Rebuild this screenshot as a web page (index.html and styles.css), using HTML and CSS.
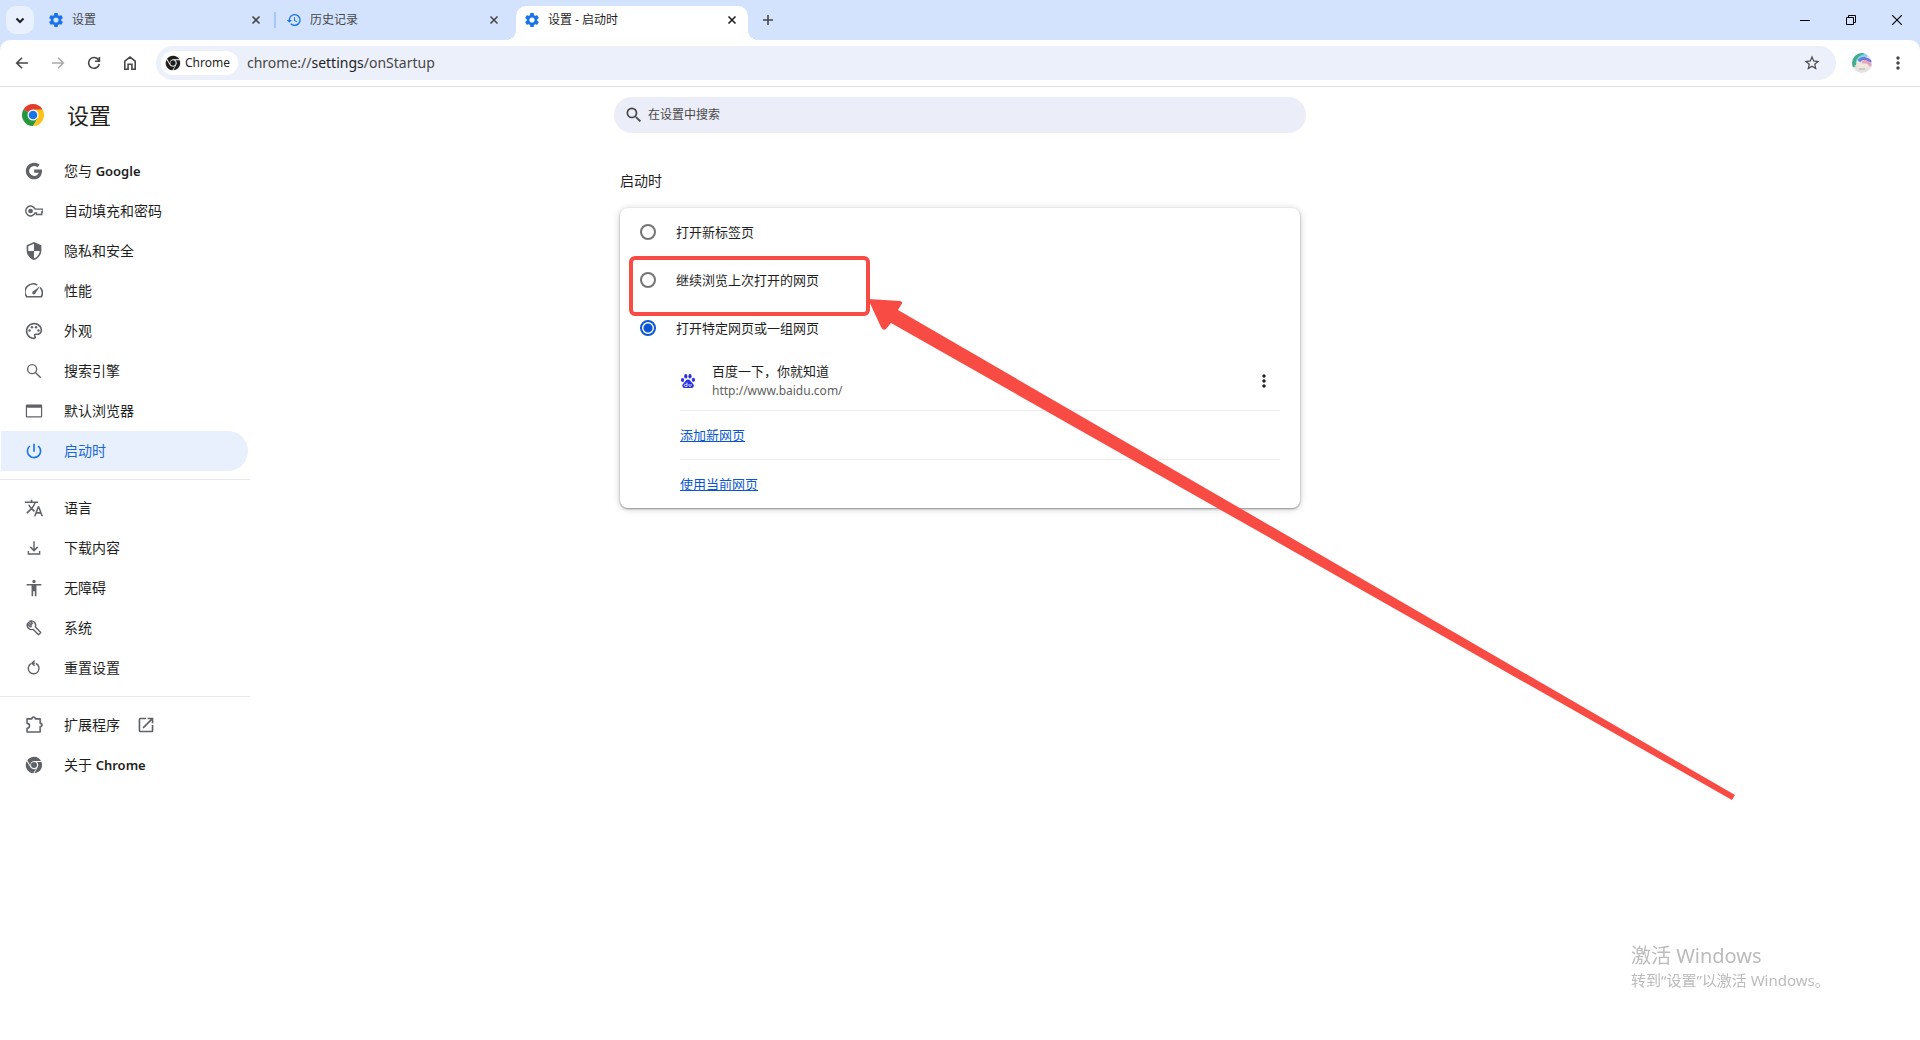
FILE: index.html
```html
<!DOCTYPE html>
<html lang="zh-CN">
<head>
<meta charset="utf-8">
<title>设置 - 启动时</title>
<link rel="stylesheet" href="styles.css">
</head>
<body>
<svg class="defs" aria-hidden="true">
  <symbol id="gear" viewBox="1 1 22 22"><path d="M19.14 12.94c.04-.3.06-.61.06-.94 0-.32-.02-.64-.07-.94l2.03-1.58c.18-.14.23-.41.12-.61l-1.92-3.32c-.12-.22-.37-.29-.59-.22l-2.39.96c-.5-.38-1.03-.7-1.62-.94l-.36-2.54c-.04-.24-.24-.41-.48-.41h-3.84c-.24 0-.43.17-.47.41l-.36 2.54c-.59.24-1.13.57-1.62.94l-2.39-.96c-.22-.08-.47 0-.59.22L2.74 8.87c-.12.21-.08.47.12.61l2.03 1.58c-.05.3-.09.63-.09.94s.02.64.07.94l-2.03 1.58c-.18.14-.23.41-.12.61l1.92 3.32c.12.22.37.29.59.22l2.39-.96c.5.38 1.03.7 1.62.94l.36 2.54c.05.24.24.41.48.41h3.84c.24 0 .44-.17.47-.41l.36-2.54c.59-.24 1.13-.56 1.62-.94l2.39.96c.22.08.47 0 .59-.22l1.92-3.32c.12-.22.07-.47-.12-.61l-2.01-1.58zM12 15.6c-1.98 0-3.6-1.62-3.6-3.6s1.62-3.6 3.6-3.6 3.6 1.62 3.6 3.6-1.62 3.6-3.6 3.6z"/></symbol>
  <symbol id="close" viewBox="0 0 16 16"><path d="M4.5 4.5l7 7M11.5 4.5l-7 7" stroke="currentColor" stroke-width="1.6" fill="none"/></symbol>
  <symbol id="search" viewBox="0 0 24 24"><path d="M15.5 14h-.79l-.28-.27A6.47 6.47 0 0 0 16 9.5 6.5 6.5 0 1 0 9.5 16c1.61 0 3.09-.59 4.23-1.57l.27.28v.79l5 4.99L20.49 19l-4.99-5zm-6 0C7.01 14 5 11.99 5 9.5S7.01 5 9.5 5 14 7.01 14 9.5 11.99 14 9.5 14z"/></symbol>
  <symbol id="dots" viewBox="0 0 24 24"><path d="M12 8c1.1 0 2-.9 2-2s-.9-2-2-2-2 .9-2 2 .9 2 2 2zm0 2c-1.1 0-2 .9-2 2s.9 2 2 2 2-.9 2-2-.9-2-2-2zm0 6c-1.1 0-2 .9-2 2s.9 2 2 2 2-.9 2-2-.9-2-2-2z"/></symbol>
  <symbol id="chrome" viewBox="0 0 24 24"><circle cx="12" cy="12" r="4"/><path d="M12 6.5h9.4A11 11 0 0 0 3 5.7l4.3 7.2A5.5 5.500 0 0 1 12 6.5zM2.2 7A11 11 0 0 0 11 23l4.2-6.6A5.5 5.5 0 0 1 7 14.6zM22 8h-6.3a5.5 5.5 0 0 1 1.2 6.5L12.500 23A11 11 0 0 0 22 8z"/></symbol>
</svg>

<header class="browser">
  <div class="tabstrip">
    <button class="tab-search" aria-label="搜索标签页"><svg width="16" height="16" viewBox="0 0 16 16"><path d="M4.500 6.500L8 10l3.500-3.500" fill="none" stroke="currentColor" stroke-width="2"/></svg></button>
    <div class="tabs">
      <div class="tab"><svg class="fav" aria-hidden="true"><use href="#gear"/></svg><span class="tab-title">设置</span><button class="tab-close" aria-label="关闭"><svg><use href="#close"/></svg></button></div>
      <span class="tab-sep"></span>
      <div class="tab"><svg class="fav" viewBox="0 0 24 24" aria-hidden="true"><path d="M13 3a9 9 0 0 0-9 9H1l3.890 3.890.07.14L9 12H6a7 7 0 1 1 2.060 4.940l-1.420 1.420A9 9 0 1 0 13 3zm-1 5v5l4.280 2.540.72-1.210-3.500-2.080V8H12z"/></svg><span class="tab-title">历史记录</span><button class="tab-close" aria-label="关闭"><svg><use href="#close"/></svg></button></div>
      <span class="tab-gap"></span>
      <div class="tab active"><svg class="fav" aria-hidden="true"><use href="#gear"/></svg><span class="tab-title">设置 - 启动时</span><button class="tab-close" aria-label="关闭"><svg><use href="#close"/></svg></button></div>
    </div>
    <button class="new-tab" aria-label="新标签页"><svg width="12" height="12" viewBox="0 0 12 12"><path d="M6 1v10M1 6h10" stroke="currentColor" stroke-width="1.600"/></svg></button>
    <div class="window-controls">
      <button aria-label="最小化"><svg width="10" height="10" viewBox="0 0 10 10"><path d="M0 5.500h10" stroke="#000"/></svg></button>
      <button aria-label="还原"><svg width="10" height="10" viewBox="0 0 10 10"><path d="M.5 2.500h7v7h-7zM2.500 2.500v-2h7v7h-2" fill="none" stroke="#000"/></svg></button>
      <button aria-label="关闭窗口"><svg width="10" height="10" viewBox="0 0 10 10"><path d="M0 0l10 10M10 0L0 10" stroke="#000" stroke-width="1.100"/></svg></button>
    </div>
  </div>

  <div class="toolbar">
    <div class="nav-buttons">
      <button aria-label="后退"><svg width="16" height="16" viewBox="0 0 16 16"><path d="M14 8H3M8 2.700L2.700 8 8 13.300" fill="none" stroke="currentColor" stroke-width="1.600"/></svg></button>
      <button aria-label="前进" disabled><svg width="16" height="16" viewBox="0 0 16 16"><path d="M2 8h11M8 2.700L13.300 8 8 13.300" fill="none" stroke="currentColor" stroke-width="1.600"/></svg></button>
      <button aria-label="重新加载"><svg width="16" height="16" viewBox="0 0 16 16"><path d="M12.600 5A5.400 5.400 0 1 0 13.300 9M13.400 2v4.200H9" fill="none" stroke="currentColor" stroke-width="1.600"/></svg></button>
      <button aria-label="主页"><svg width="16" height="16" viewBox="0 0 16 16"><path d="M2.800 14.200V6.100L8 2l5.200 4.100v8.100H9.900V9.300H6.100v4.900z" fill="none" stroke="currentColor" stroke-width="1.600"/></svg></button>
    </div>
    <div class="omnibox">
      <button class="chip"><svg width="16" height="16" aria-hidden="true"><use href="#chrome"/></svg>Chrome</button>
      <span class="url">chrome://<b>settings</b>/onStartup</span>
      <button class="star" aria-label="为此标签页添加书签"><svg width="18" height="18" viewBox="0 0 24 24"><path d="M22 9.240l-7.190-.62L12 2 9.190 8.630 2 9.240l5.460 4.730L5.820 21 12 17.270 18.180 21l-1.630-7.030L22 9.240zM12 15.400l-3.760 2.270 1-4.280-3.320-2.880 4.380-.38L12 6.100l1.710 4.040 4.380.38-3.320 2.880 1 4.280L12 15.400z"/></svg></button>
    </div>
    <div class="tool-actions">
      <button aria-label="个人资料"><svg width="20" height="20" viewBox="0 0 20 20"><clipPath id="avatar"><circle cx="10" cy="10" r="10"/></clipPath><g clip-path="url(#avatar)"><path fill="#e4e3e2" d="M0 0h20v20H0z"/><path fill="#3fae8c" d="M0 0h13L4 14H0z"/><path d="M5 10C6 5 10 2 15 3" fill="none" stroke="#7fd3ee" stroke-width="3"/><path d="M7 8c3-4 8-3 12 1" fill="none" stroke="#6f79dc" stroke-width="3"/><path d="M10 9c4-1 7 0 9 4" fill="none" stroke="#eaa3bf" stroke-width="3"/><path d="M2 13l2-1 1-5 3 3 3 1h4l2 3-1 3-1-3-4 1-3 1-1-4-3 2z" fill="#f1e8d8"/><path d="M7 16h6" stroke="#bbb3ad"/></g></svg></button>
      <button aria-label="自定义及控制"><svg width="20" height="20"><use href="#dots"/></svg></button>
    </div>
  </div>
</header>

<div class="settings">
  <div class="settings-header">
    <div class="brand">
      <svg width="24" height="24" viewBox="0 0 24 24" aria-hidden="true"><path d="M12 12L2.470 6.500A11 11 0 0 1 21.530 6.500z" fill="#e33b2e"/><path d="M12 12L2.470 6.500A11 11 0 0 0 12 23l5-8z" fill="#25973f"/><path d="M12 12l5 2.500L12 23A11 11 0 0 0 21.530 6.500H12z" fill="#fcc21b"/><circle cx="12" cy="12" r="5.500" fill="#fff"/><circle cx="12" cy="12" r="4.300" fill="#1a73e8"/></svg>
      <h1>设置</h1>
    </div>
    <label class="search"><svg width="20" height="20" aria-hidden="true"><use href="#search"/></svg><input type="search" placeholder="在设置中搜索" aria-label="在设置中搜索"></label>
    <div></div>
  </div>

  <div class="settings-body">
    <nav class="side">
      <ul>
        <li><a href="#people"><svg viewBox="1 1 22 22"><path d="M21.800 10.300H12.200v3.900h5.500c-.6 2.500-2.600 3.900-5.500 3.900a6.100 6.100 0 1 1 3.900-10.800l2.900-2.900A10.200 10.200 0 1 0 12.200 22.200c6 0 9.900-4.200 9.600-11.900z"/></svg><span>您与 <span class="latin">Google</span></span></a></li>
        <li><a href="#autofill"><svg viewBox="1 1 22 22"><path d="M13.400 9.700A6 6 0 1 0 13.400 14.300H15v2h6.500v-3H23V9.700z" fill="none" stroke="currentColor" stroke-width="1.700"/><circle cx="7.800" cy="12" r="2.900"/></svg>自动填充和密码</a></li>
        <li><a href="#privacy"><svg viewBox="1 1 22 22"><path d="M12 1L3 5v6c0 5.550 3.840 10.740 9 12 5.160-1.260 9-6.450 9-12V5l-9-4zm0 11H19c-.53 4.120-3.280 7.790-7 8.940zM12 12H5V6.300l7-3.110z"/></svg>隐私和安全</a></li>
        <li><a href="#performance"><svg viewBox="1 1 22 22"><path d="M19.500 7.800A9.800 9.800 0 0 1 21 19H3A9.800 9.800 0 0 1 16 4.800" fill="none" stroke="currentColor" stroke-width="2"/><path d="M19.300 6.200l-5.900 9.200a2 2 0 1 1-2.800-2.800z"/></svg>性能</a></li>
        <li><a href="#appearance"><svg viewBox="1 1 22 22"><path d="M12 22C6.490 22 2 17.510 2 12S6.490 2 12 2s10 4.040 10 9c0 3.310-2.690 6-6 6h-1.770c-.28 0-.5.22-.5.5 0 .12.05.23.13.33.41.47.64 1.060.64 1.670A2.500 2.500 0 0 1 12 22zm0-18c-4.410 0-8 3.590-8 8s3.590 8 8 8c.28 0 .5-.22.5-.5a.54.54 0 0 0-.14-.35c-.41-.46-.63-1.050-.63-1.650a2.500 2.500 0 0 1 2.500-2.500H16c2.210 0 4-1.790 4-4 0-3.860-3.590-7-8-7z"/><circle cx="6.500" cy="11.500" r="1.500"/><circle cx="9.500" cy="7.500" r="1.500"/><circle cx="14.500" cy="7.500" r="1.500"/><circle cx="17.500" cy="11.500" r="1.500"/></svg>外观</a></li>
        <li><a href="#engine"><svg viewBox="0 0 24 24"><circle cx="9.500" cy="9.500" r="6" fill="none" stroke="currentColor" stroke-width="1.800"/><path d="M14 14l7 7" stroke="currentColor" stroke-width="2"/></svg>搜索引擎</a></li>
        <li><a href="#default"><svg viewBox="1 1 22 22"><path d="M20.500 4h-17C2.400 4 2 4.700 2 5.500v13c0 .8.400 1.500 1.500 1.500h17c1.100 0 1.500-.7 1.500-1.500v-13c0-.8-.4-1.500-1.500-1.500zm0 14.500h-17V8h17z"/></svg>默认浏览器</a></li>
        <li><a href="#startup" class="current" aria-current="page"><svg viewBox="1 1 22 22"><path d="M13 3h-2v10h2V3zm4.830 2.170l-1.420 1.420A6.920 6.920 0 0 1 19 12a7 7 0 1 1-11.420-5.420L6.170 5.170A8.930 8.930 0 0 0 3 12a9 9 0 1 0 14.830-6.830z"/></svg>启动时</a></li>
      </ul>
      <ul>
        <li><a href="#languages"><svg viewBox="1 1 22 22"><path d="M12.870 15.070l-2.540-2.510.03-.03A17.520 17.520 0 0 0 14.070 6H17V4h-7V2H8v2H1v1.990h11.170C11.500 7.920 10.440 9.750 9 11.350 8.070 10.320 7.300 9.190 6.690 8h-2c.73 1.630 1.730 3.170 2.980 4.560l-5.090 5.020L4 19l5-5 3.110 3.110.76-2.040zM18.500 10h-2L12 22h2l1.120-3h4.750L21 22h2l-4.500-12zm-2.620 7l1.620-4.330L19.120 17h-3.240z"/></svg>语言</a></li>
        <li><a href="#downloads"><svg viewBox="0 0 24 24"><path d="M12 3v12M7 10.500l5 5 5-5M4.500 16v4h15v-4" fill="none" stroke="currentColor" stroke-width="1.900"/></svg>下载内容</a></li>
        <li><a href="#a11y"><svg viewBox="1 1 22 22"><path d="M12 2c1.100 0 2 .9 2 2s-.9 2-2 2-2-.9-2-2 .9-2 2-2zm9 7h-6v13h-2v-6h-2v6H9V9H3V7h18v2z"/></svg>无障碍</a></li>
        <li><a href="#system"><svg viewBox="0 0 24 24"><path d="M4.200 3.900l3.700 3.700 2-2L6.300 2.900A6 6 0 0 1 13.800 10.800L21 18l-3 3-7.200-7.200A6 6 0 0 1 3.300 6l3.400 4.300 2.300-1" fill="none" stroke="currentColor" stroke-width="1.900" stroke-linejoin="round"/></svg>系统</a></li>
        <li><a href="#reset"><svg viewBox="0 0 24 24"><path d="M14.500 6A7.200 7.200 0 1 1 8 6.300M8.500 5.500h5M12.800 2L9.300 5.500 12.800 9" fill="none" stroke="currentColor" stroke-width="1.900"/></svg>重置设置</a></li>
      </ul>
      <ul>
        <li><a href="#extensions"><svg viewBox="1 1 22 22"><path d="M3.500 4.500h6c0-3 4-3 4 0h6v5.500c3 0 3 4 0 4v6.500h-16V16c4 0 4-6 0-6z" fill="none" stroke="currentColor" stroke-width="1.900" stroke-linejoin="round"/></svg>扩展程序<svg class="external" viewBox="1 1 22 22"><path d="M19 19H5V5h7V3H5a2 2 0 0 0-2 2v14a2 2 0 0 0 2 2h14c1.100 0 2-.9 2-2v-7h-2v7zM14 3v2h3.590l-9.830 9.830 1.410 1.410L19 6.410V10h2V3h-7z"/></svg></a></li>
        <li><a href="#about"><svg><use href="#chrome"/></svg><span>关于 <span class="latin">Chrome</span></span></a></li>
      </ul>
    </nav>

    <main class="content">
      <h2>启动时</h2>
      <form class="card">
        <label class="option"><input type="radio" name="startup">打开新标签页</label>
        <div class="marked">
          <label class="option"><input type="radio" name="startup">继续浏览上次打开的网页</label>
          <div class="highlight"></div>
          <svg class="arrow" width="870" height="506" viewBox="0 0 870 506" aria-hidden="true"><path d="M2 6L34 8Q38 9 35 12L32 17 869 502 866 507 25 30 20 36Q17 38 15 34z"/></svg>
        </div>
        <label class="option"><input type="radio" name="startup" checked>打开特定网页或一组网页</label>
        <div class="pages">
          <div class="page">
            <svg class="paw" width="16" height="16" viewBox="0 0 16 16" aria-hidden="true"><g fill="#2932e1"><ellipse cx="2.600" cy="7" rx="1.600" ry="2.100"/><ellipse cx="5.800" cy="3.200" rx="1.600" ry="2.200"/><ellipse cx="10" cy="3.200" rx="1.600" ry="2.200"/><ellipse cx="13.400" cy="6.800" rx="1.600" ry="2.100"/><path d="M8 6.600c2 0 2.600 1.700 3.800 2.800 1.500 1.300 2.600 2.600 1.700 4.400-1 1.900-3.200 1.100-5.500 1.100s-4.500.8-5.400-1.100c-.9-1.800.3-3.100 1.700-4.400C5.500 8.300 6 6.600 8 6.600z"/></g><path d="M7 9.500v4H5.300c-1.300 0-1.300-2.200 0-2.200H7M9 11v1.600c0 1.200 2 1.200 2 0V11" fill="none" stroke="#fff" stroke-width=".8"/></svg>
            <div class="page-text"><div>百度一下，你就知道</div><div class="page-url">http://www.baidu.com/</div></div>
            <button type="button" class="more" aria-label="更多操作"><svg width="20" height="20"><use href="#dots"/></svg></button>
          </div>
          <div class="page"><a href="#add">添加新网页</a></div>
          <div class="page"><a href="#use-current">使用当前网页</a></div>
        </div>
      </form>
    </main>
    <div></div>
  </div>
</div>

<aside class="watermark"><p class="big">激活 Windows</p><p>转到“设置”以激活 Windows。</p></aside>
</body>
</html>
```
FILE: styles.css
```css
* { box-sizing: border-box; }

body {
  margin: 0;
  min-height: 100vh;
  background: #fff;
  color: #1f1f1f;
  font: 13px/20px "Noto Sans", "Noto Sans CJK SC", sans-serif;
  overflow-x: hidden;
}

svg { display: block; flex: none; fill: currentColor; }
.defs { position: absolute; width: 0; height: 0; }

button {
  display: flex;
  align-items: center;
  justify-content: center;
  padding: 0;
  border: 0;
  background: none;
  color: inherit;
  font: inherit;
}

h1, h2, p, ul { margin: 0; padding: 0; font-weight: 400; }
ul { list-style: none; }

/* Tab strip */
.browser { background: #d3e3fd; }

.tabstrip {
  display: flex;
  align-items: center;
  height: 40px;
  padding-left: 6px;
  font-size: 12px;
  color: #474747;
}

.tab-search {
  width: 28px;
  height: 28px;
  margin-right: 6px;
  border-radius: 10px;
  background: #e9f1fe;
  color: #1f1f1f;
}

.tabs { display: flex; align-self: stretch; padding-top: 6px; }

.tab {
  display: flex;
  align-items: center;
  width: 232px;
  padding: 0 8px 6px;
}

.fav { width: 16px; height: 16px; margin-right: 8px; color: #1a73e8; }
.tab-title { flex: 1; }
.tab-close { width: 16px; height: 16px; }
.tab-close svg { width: 16px; height: 16px; }
.tab-sep { width: 2px; height: 16px; margin: 6px 2px; background: #a8c7fa; }
.tab-gap { width: 6px; }

.active {
  position: relative;
  border-radius: 10px 10px 0 0;
  background: #fff;
  color: #1f1f1f;
}

.active::before, .active::after {
  content: "";
  position: absolute;
  bottom: 0;
  width: 10px;
  height: 10px;
}
.active::before { right: 100%; background: radial-gradient(circle at 0 0, transparent 10px, #fff 10px); }
.active::after { left: 100%; background: radial-gradient(circle at 100% 0, transparent 10px, #fff 10px); }

.new-tab { width: 28px; height: 28px; margin-left: 6px; }
.window-controls { display: flex; margin-left: auto; }
.window-controls button { width: 46px; height: 40px; }

/* Address bar */
.toolbar {
  display: flex;
  align-items: center;
  height: 47px;
  padding: 0 8px;
  border-bottom: 1px solid #dcdfe3;
  border-radius: 10px 10px 0 0;
  background: #fff;
  color: #474747;
}

.nav-buttons { display: flex; gap: 8px; margin-right: 12px; }
.nav-buttons button, .tool-actions button { width: 28px; height: 28px; }
.nav-buttons button:disabled { color: #ababab; }

.omnibox {
  display: flex;
  flex: 1;
  align-items: center;
  height: 34px;
  padding: 0 15px 0 5px;
  border-radius: 17px;
  background: #ecf0fa;
}

.chip {
  gap: 4px;
  height: 24px;
  padding: 0 8px 0 4px;
  border-radius: 12px;
  background: #fff;
  color: #1f1f1f;
  font-size: 12px;
}

.url { flex: 1; margin-left: 9px; font-size: 14px; }
.url b { color: #1f1f1f; font-weight: 400; }
.tool-actions { display: flex; gap: 8px; margin-left: 12px; }

/* Settings header */
.settings-header, .settings-body {
  display: grid;
  grid-template-columns: 1fr minmax(0, 692px) 1fr;
}

.settings-header { align-items: center; height: 56px; }
.brand { display: flex; align-items: center; gap: 22px; padding-left: 21px; }
h1 { font-size: 22px; line-height: 32px; }

.search {
  display: flex;
  align-items: center;
  gap: 4px;
  height: 36px;
  padding: 0 10px;
  border-radius: 18px;
  background: #ebeef8;
  color: #474747;
}

.search input {
  flex: 1;
  min-width: 0;
  padding: 0;
  border: 0;
  background: none;
  color: inherit;
  font: inherit;
  font-size: 12px;
}
.search input::placeholder { color: #474747; opacity: 1; }

/* Side menu */
.side { width: 250px; font-size: 14px; }
.side ul { padding: 8px 2px 8px 1px; }
.side ul + ul { border-top: 1px solid #e8e8e8; }

.side a {
  display: flex;
  align-items: center;
  height: 40px;
  padding-left: 24px;
  border-radius: 0 20px 20px 0;
  color: #1f1f1f;
  text-decoration: none;
}

.latin { font-size: 13px; font-weight: 600; }
.side svg { width: 18px; height: 18px; margin-right: 21px; color: #5f6368; }
.side .external { margin: 0 17px; }
.side .current { background: #e8f0fe; color: #1967d2; }
.side .current svg { color: #1a73e8; }

/* Startup card */
.content { padding: 28px 6px 48px; }
h2 { font-size: 14px; margin-bottom: 17px; }

.card {
  border-radius: 8px;
  background: #fff;
  box-shadow: 0 1px 2px rgba(60, 64, 67, .5), 0 1px 6px 1px rgba(60, 64, 67, .2);
}

.option { display: flex; align-items: center; gap: 20px; height: 48px; padding-left: 20px; }

.option input {
  appearance: none;
  width: 16px;
  height: 16px;
  margin: 0;
  border: 2px solid #757575;
  border-radius: 50%;
}
.option input:checked {
  border-color: #0b57d0;
  background: radial-gradient(circle, #0b57d0 4px, transparent 5px);
}

.marked { position: relative; }

/* Annotation drawn over the card */
.highlight {
  position: absolute;
  top: 0;
  left: 9px;
  width: 241px;
  height: 60px;
  border: 4px solid #f84b44;
  border-radius: 6px;
  pointer-events: none;
}
.arrow { position: absolute; top: 37px; left: 246px; z-index: 1; overflow: visible; color: #f84b44; pointer-events: none; }

.pages { padding: 0 20px 0 60px; }
.page { display: flex; align-items: center; min-height: 48px; }
.page + .page { border-top: 1px solid #ececec; min-height: 49px; }
.page:first-child { min-height: 58px; }
.paw { margin-right: 16px; }
.page-text { flex: 1; }
.page-url { color: #5f5f5f; font-size: 12px; }
.more { width: 32px; height: 32px; color: #1f1f1f; }
.page a { color: #0b57d0; }

.watermark {
  position: fixed;
  right: 89px;
  bottom: 48px;
  width: 200px;
  color: #bbb;
  font-size: 15px;
  line-height: 24px;
  white-space: nowrap;
  pointer-events: none;
}
.watermark .big { font-size: 20px; }
```
